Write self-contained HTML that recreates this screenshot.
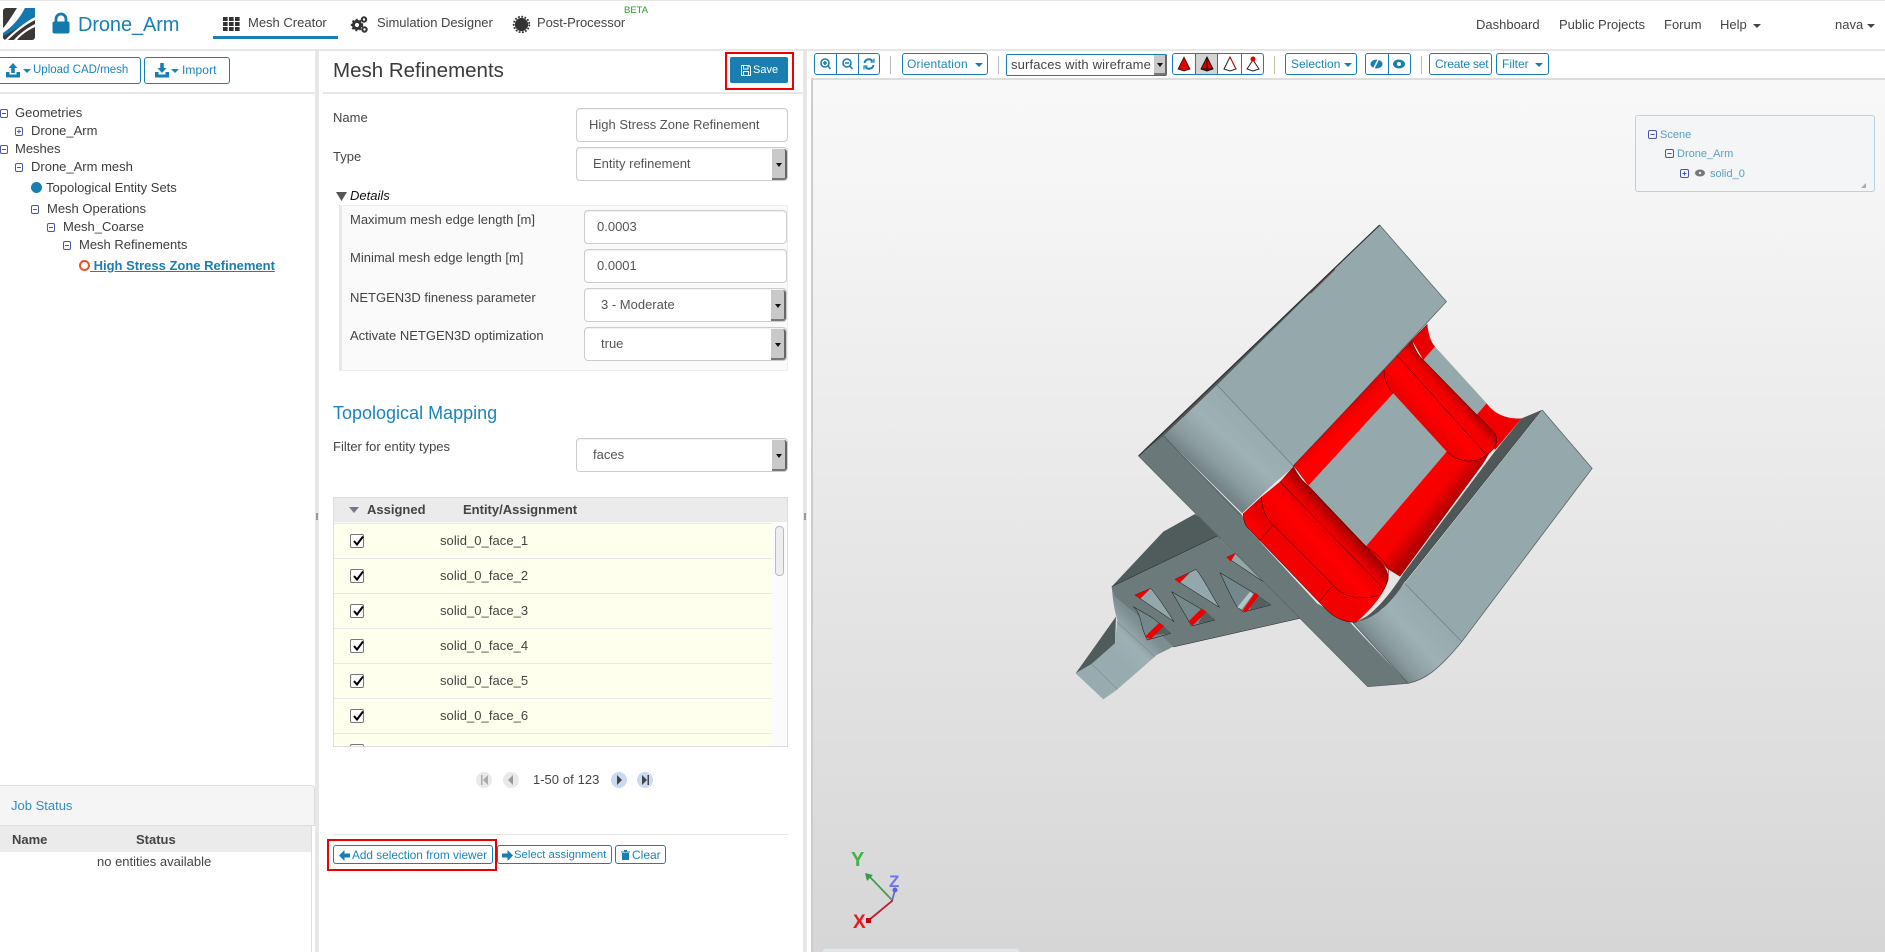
<!DOCTYPE html>
<html lang="en"><head><meta charset="utf-8"><title>Mesh Refinements</title>
<style>
html,body{margin:0;padding:0;width:1885px;height:952px;overflow:hidden;background:#fff;font-family:"Liberation Sans",sans-serif;font-size:13px;color:#444}
.a{position:absolute;box-sizing:border-box}
.t{position:absolute;white-space:nowrap;line-height:20px;height:20px}
.nav{color:#444;font-size:13px}
.tree{color:#3c3c3c;font-size:13px}
.b{position:absolute;box-sizing:border-box;border:1px solid #1a7fb0;border-radius:3px;background:#fff;color:#1a85bb}
.lb{font-size:13px;color:#444}
.in{position:absolute;box-sizing:border-box;border:1px solid #ccc;border-radius:4px;background:#fff;color:#555;font-size:13px;line-height:32px;box-shadow:inset 0 1px 1px rgba(0,0,0,.06)}
.sb{position:absolute;right:0;top:1px;bottom:0;width:15px;background:#c9c9c9;border-right:2px solid #666;border-bottom:2px solid #777;box-sizing:border-box;border-radius:0 3px 3px 0}
.sb:after{content:"";position:absolute;left:4px;top:14px;border:3px solid transparent;border-top:4px solid #111;border-bottom:0}
.row{position:absolute;left:334px;width:438px;height:35px;background:#ffffee;border-top:1px solid #e8e8e8;box-sizing:border-box}
.cb{position:absolute;left:16px;top:10px;width:14px;height:14px;box-sizing:border-box;border:1px solid #777;border-radius:2px;background:#fff}
.rt{position:absolute;left:106px;top:7px;line-height:20px;font-size:13px;color:#444;letter-spacing:.05px}
.car{position:absolute;width:0;height:0;border:4px solid transparent;border-top:4px solid currentColor;border-bottom:0}
.sep{position:absolute;width:1px;background:#b8b8cc;top:56px;height:18px}
.pg{position:absolute;top:772px;width:16px;height:16px;border-radius:50%}
.sc{position:absolute;font-size:11px;color:#5a9fc0;line-height:14px;white-space:nowrap}
svg{position:absolute;overflow:visible}
</style></head><body>

<!-- header -->
<div class="a" style="left:0;top:0;width:1885px;height:1px;background:#e7e7e7"></div>
<div class="a" style="left:0;top:49px;width:1885px;height:2px;background:#e7e7e7"></div>
<svg style="left:3px;top:8px" width="33" height="32" viewBox="0 0 33 32">
<rect width="32" height="32" rx="3" fill="#3b3735"/>
<path d="M14 0C10 6 5 15 0 20V26C8 21 17 12 22 0Z" fill="#fff"/>
<path d="M22 0H32V9C24 13 12 23 0 28V25C9 19 17 10 22 0Z" fill="#1478ad"/>
<path d="M32 9V12C22 17 12 25 5 32H2C10 24 22 14 32 9Z" fill="#fff"/>
<path d="M32 16V19C25 22 18 27 14 32H11C16 26 24 20 32 16Z" fill="#fff"/>
</svg>
<svg style="left:52px;top:13px" width="18" height="21" viewBox="0 0 18 21"><path d="M4 9V6a5 5 0 0 1 10 0v3" fill="none" stroke="#1479ad" stroke-width="2.8"/><rect x="0.5" y="8.5" width="17" height="12" rx="2" fill="#1479ad"/></svg>
<div class="t" style="left:78px;top:15px;font-size:20px;color:#1a7fb5;letter-spacing:-.1px">Drone_Arm</div>

<svg style="left:223px;top:17px" width="17" height="14" viewBox="0 0 17 14" fill="#333"><rect width="4.6" height="4"/><rect x="6" width="4.6" height="4"/><rect x="12" width="4.6" height="4"/><rect y="5" width="4.6" height="4"/><rect x="6" y="5" width="4.6" height="4"/><rect x="12" y="5" width="4.6" height="4"/><rect y="10" width="4.6" height="4"/><rect x="6" y="10" width="4.6" height="4"/><rect x="12" y="10" width="4.6" height="4"/></svg>
<div class="t nav" style="left:248px;top:13px">Mesh Creator</div>
<div class="a" style="left:213px;top:36px;width:125px;height:3px;background:#1a7fb0"></div>
<svg style="left:350px;top:15px" width="18" height="18" viewBox="0 0 18 18"><circle cx="7" cy="10" r="3.6" fill="none" stroke="#333" stroke-width="3"/><circle cx="14" cy="4.5" r="2.2" fill="none" stroke="#333" stroke-width="2"/><circle cx="14.5" cy="14.5" r="2.2" fill="none" stroke="#333" stroke-width="2"/><circle cx="7" cy="10" r="5.4" fill="none" stroke="#333" stroke-width="1.6" stroke-dasharray="2 2"/></svg>
<div class="t nav" style="left:377px;top:13px;letter-spacing:-.03px">Simulation Designer</div>
<svg style="left:513px;top:16px" width="17" height="17" viewBox="0 0 17 17"><circle cx="8.5" cy="8.5" r="6.6" fill="#333"/><circle cx="8.5" cy="8.5" r="7.8" fill="none" stroke="#333" stroke-width="1.8" stroke-dasharray="1.8 1.5"/></svg>
<div class="t nav" style="left:537px;top:13px;letter-spacing:-.05px">Post-Processor</div>
<div class="t" style="left:624px;top:1px;font-size:9.5px;color:#2a9a2a">BETA</div>

<div class="t nav" style="left:1476px;top:15px">Dashboard</div>
<div class="t nav" style="left:1559px;top:15px">Public Projects</div>
<div class="t nav" style="left:1664px;top:15px">Forum</div>
<div class="t nav" style="left:1720px;top:15px">Help</div>
<div class="car" style="left:1753px;top:24px;color:#444"></div>
<div class="t nav" style="left:1835px;top:15px">nava</div>
<div class="car" style="left:1867px;top:24px;color:#444"></div>

<!-- vertical separators -->
<div class="a" style="left:315px;top:51px;width:4px;height:901px;background:#e7e7e7"></div>
<div class="a" style="left:803px;top:51px;width:4px;height:901px;background:#e7e7e7"></div>
<div class="a" style="left:316px;top:513px;width:2px;height:7px;border-left:1px solid #999;border-right:1px solid #999"></div>
<div class="a" style="left:804px;top:513px;width:2px;height:7px;border-left:1px solid #999;border-right:1px solid #999"></div>

<!-- left panel -->
<div class="b" style="left:-3px;top:57px;width:144px;height:27px"></div>
<svg style="left:6px;top:63px" width="14" height="15" viewBox="0 0 14 15" fill="#1a7fb0"><path d="M7 0L11.5 5H8.8V10H5.2V5H2.5Z"/><path d="M0 9H3.5V11.5H10.5V9H14V14.5H0Z"/></svg>
<div class="car" style="left:23px;top:69px;color:#1a85bb"></div>
<div class="t" style="left:33px;top:60px;font-size:11.5px;color:#1a85bb">Upload CAD/mesh</div>
<div class="b" style="left:144px;top:57px;width:86px;height:27px"></div>
<svg style="left:155px;top:63px" width="14" height="15" viewBox="0 0 14 15" fill="#1a7fb0"><path d="M5.2 0H8.8V5H11.5L7 10L2.5 5H5.2Z"/><path d="M0 9H3.5V11.5H10.5V9H14V14.5H0Z"/></svg>
<div class="car" style="left:171px;top:69px;color:#1a85bb"></div>
<div class="t" style="left:182px;top:60px;font-size:12px;color:#1a85bb;letter-spacing:.1px">Import</div>
<div class="a" style="left:0;top:92px;width:315px;height:2px;background:#e7e7e7"></div>

<svg style="left:0;top:100px" width="100" height="160" viewBox="0 0 100 160" fill="none" stroke="#4a55a8" stroke-width="1">
<g><rect x="0.5" y="9.5" width="7" height="8" rx="1.5"/><path d="M2 13.5H6"/>
<rect x="15.5" y="27.5" width="7" height="8" rx="1.5"/><path d="M17 31.5H21M19 29.5V33.5"/>
<rect x="0.5" y="45.5" width="7" height="8" rx="1.5"/><path d="M2 49.5H6"/>
<rect x="15.5" y="63.5" width="7" height="8" rx="1.5"/><path d="M17 67.5H21"/>
<rect x="31.5" y="105.5" width="7" height="8" rx="1.5"/><path d="M33 109.5H37"/>
<rect x="47.5" y="123.5" width="7" height="8" rx="1.5"/><path d="M49 127.5H53"/>
<rect x="63.5" y="141.5" width="7" height="8" rx="1.5"/><path d="M65 145.5H69"/></g></svg>
<div class="t tree" style="left:15px;top:103px">Geometries</div>
<div class="t tree" style="left:31px;top:121px">Drone_Arm</div>
<div class="t tree" style="left:15px;top:139px">Meshes</div>
<div class="t tree" style="left:31px;top:157px">Drone_Arm mesh</div>
<div class="a" style="left:31px;top:182px;width:11px;height:11px;border-radius:50%;background:#1a7fb0"></div>
<div class="t tree" style="left:46px;top:178px">Topological Entity Sets</div>
<div class="t tree" style="left:47px;top:199px">Mesh Operations</div>
<div class="t tree" style="left:63px;top:217px">Mesh_Coarse</div>
<div class="t tree" style="left:79px;top:235px">Mesh Refinements</div>
<div class="a" style="left:79px;top:260px;width:11px;height:11px;border-radius:50%;border:2px solid #e2562a"></div>
<div class="t" style="left:90px;top:256px;font-size:13px;font-weight:bold;color:#1a7fb0;text-decoration:underline;white-space:pre"> High Stress Zone Refinement</div>

<!-- job status -->
<div class="a" style="left:0;top:785px;width:315px;height:41px;background:#f5f5f5;border-top:1px solid #ddd;border-right:1px solid #ddd;border-bottom:1px solid #ddd;border-radius:0 4px 0 0"></div>
<div class="t" style="left:11px;top:796px;font-size:13px;color:#2f8fc0">Job Status</div>
<div class="a" style="left:0;top:826px;width:311px;height:26px;background:#ebebeb"></div>
<div class="a" style="left:311px;top:826px;width:1px;height:126px;background:#ddd"></div>
<div class="t" style="left:12px;top:830px;font-size:13px;font-weight:bold;color:#444">Name</div>
<div class="t" style="left:136px;top:830px;font-size:13px;font-weight:bold;color:#444">Status</div>
<div class="t" style="left:97px;top:852px;font-size:13px;color:#444">no entities available</div>

<!-- middle panel -->
<div class="t" style="left:333px;top:60px;font-size:20.5px;line-height:22px;height:22px;color:#3a3a3a">Mesh Refinements</div>
<div class="a" style="left:323px;top:92px;width:480px;height:2px;background:#e7e7e7"></div>
<div class="a" style="left:725px;top:52px;width:69px;height:38px;border:2px solid #ee0000"></div>
<div class="a" style="left:730px;top:57px;width:58px;height:26px;background:#1a7fb0;border-radius:2px"></div>
<svg style="left:741px;top:65px" width="10" height="11" viewBox="0 0 10 11" fill="none" stroke="#fff" stroke-width="1"><path d="M.5.5H8L9.5 2V10.500H.5Z"/><path d="M2.500.5V4H7V.5M2.500 10.500V6.500H7.500V10.500"/></svg>
<div class="t" style="left:753px;top:60px;font-size:11px;color:#fff">Save</div>

<div class="t lb" style="left:333px;top:108px">Name</div>
<div class="in" style="left:576px;top:108px;width:212px;height:34px;padding-left:12px">High Stress Zone Refinement</div>
<div class="t lb" style="left:333px;top:147px">Type</div>
<div class="in" style="left:576px;top:147px;width:212px;height:34px;padding-left:16px">Entity refinement<div class="sb"></div></div>
<svg style="left:336px;top:192px" width="11" height="9" viewBox="0 0 11 9"><path d="M0 0H11L5.500 9Z" fill="#555"/></svg>
<div class="t" style="left:350px;top:186px;font-size:13px;font-style:italic;color:#111">Details</div>
<div class="a" style="left:339px;top:205px;width:449px;height:166px;background:#fafafa;border:1px solid #eee;border-left:3px solid #e8e8e8"></div>
<div class="t lb" style="left:350px;top:210px">Maximum mesh edge length [m]</div>
<div class="in" style="left:584px;top:210px;width:203px;height:34px;padding-left:12px">0.0003</div>
<div class="t lb" style="left:350px;top:248px">Minimal mesh edge length [m]</div>
<div class="in" style="left:584px;top:249px;width:203px;height:34px;padding-left:12px">0.0001</div>
<div class="t lb" style="left:350px;top:288px">NETGEN3D fineness parameter</div>
<div class="in" style="left:584px;top:288px;width:203px;height:34px;padding-left:16px">3 - Moderate<div class="sb"></div></div>
<div class="t lb" style="left:350px;top:326px">Activate NETGEN3D optimization</div>
<div class="in" style="left:584px;top:327px;width:203px;height:34px;padding-left:16px">true<div class="sb"></div></div>
<div class="t" style="left:333px;top:403px;font-size:18px;color:#1a85bb">Topological Mapping</div>
<div class="t lb" style="left:333px;top:437px">Filter for entity types</div>
<div class="in" style="left:576px;top:438px;width:212px;height:34px;padding-left:16px">faces<div class="sb"></div></div>

<!-- table -->
<div class="a" style="left:333px;top:497px;width:455px;height:250px;border:1px solid #ddd;overflow:hidden;background:#fbfbfb"></div>
<div class="a" style="left:334px;top:498px;width:453px;height:24px;background:#ebebeb"></div>
<svg style="left:349px;top:507px" width="10" height="6" viewBox="0 0 10 6"><path d="M0 0H10L5 6Z" fill="#778"/></svg>
<div class="t" style="left:367px;top:500px;font-size:13px;font-weight:bold;color:#444">Assigned</div>
<div class="t" style="left:463px;top:500px;font-size:13px;font-weight:bold;color:#444">Entity/Assignment</div>
<div class="row" style="top:523px"><div class="cb"><svg style="left:1px;top:0" width="12" height="12" viewBox="0 0 12 12"><path d="M2 6L5 9.500L11 1.500" fill="none" stroke="#000" stroke-width="2"/></svg></div><div class="rt">solid_0_face_1</div></div>
<div class="row" style="top:558px"><div class="cb"><svg style="left:1px;top:0" width="12" height="12" viewBox="0 0 12 12"><path d="M2 6L5 9.500L11 1.500" fill="none" stroke="#000" stroke-width="2"/></svg></div><div class="rt">solid_0_face_2</div></div>
<div class="row" style="top:593px"><div class="cb"><svg style="left:1px;top:0" width="12" height="12" viewBox="0 0 12 12"><path d="M2 6L5 9.500L11 1.500" fill="none" stroke="#000" stroke-width="2"/></svg></div><div class="rt">solid_0_face_3</div></div>
<div class="row" style="top:628px"><div class="cb"><svg style="left:1px;top:0" width="12" height="12" viewBox="0 0 12 12"><path d="M2 6L5 9.500L11 1.500" fill="none" stroke="#000" stroke-width="2"/></svg></div><div class="rt">solid_0_face_4</div></div>
<div class="row" style="top:663px"><div class="cb"><svg style="left:1px;top:0" width="12" height="12" viewBox="0 0 12 12"><path d="M2 6L5 9.500L11 1.500" fill="none" stroke="#000" stroke-width="2"/></svg></div><div class="rt">solid_0_face_5</div></div>
<div class="row" style="top:698px"><div class="cb"><svg style="left:1px;top:0" width="12" height="12" viewBox="0 0 12 12"><path d="M2 6L5 9.500L11 1.500" fill="none" stroke="#000" stroke-width="2"/></svg></div><div class="rt">solid_0_face_6</div></div>
<div class="row" style="top:733px;height:14px;overflow:hidden"><div class="cb"></div></div>
<div class="a" style="left:333px;top:746px;width:455px;height:1px;background:#ddd"></div>
<div class="a" style="left:775px;top:526px;width:9px;height:50px;background:#eee;border:1px solid #bbb;border-radius:4px"></div>

<!-- pager -->
<div class="pg" style="left:476px;background:#e9e9e9"></div>
<svg style="left:480px;top:775px" width="9" height="10" viewBox="0 0 9 10"><path d="M1 0H2.500V10H1ZM8 0V10L3 5Z" fill="#aaa"/></svg>
<div class="pg" style="left:503px;background:#e9e9e9"></div>
<svg style="left:507px;top:775px" width="7" height="10" viewBox="0 0 7 10"><path d="M6 0V10L1 5Z" fill="#999"/></svg>
<div class="t" style="left:533px;top:770px;font-size:13px;color:#444;word-spacing:.3px">1-50 of 123</div>
<div class="pg" style="left:611px;background:#c9daf2"></div>
<svg style="left:616px;top:775px" width="7" height="10" viewBox="0 0 7 10"><path d="M1 0V10L6 5Z" fill="#444"/></svg>
<div class="pg" style="left:637px;background:#c9daf2"></div>
<svg style="left:641px;top:775px" width="9" height="10" viewBox="0 0 9 10"><path d="M1 0V10L6 5ZM6.500 0H8V10H6.500Z" fill="#444"/></svg>

<!-- bottom buttons -->
<div class="a" style="left:333px;top:834px;width:455px;height:1px;background:#e5e5e5"></div>
<div class="a" style="left:327px;top:839px;width:170px;height:32px;border:2px solid #ee0000"></div>
<div class="b" style="left:333px;top:845px;width:160px;height:19px"></div>
<svg style="left:339px;top:850px" width="11" height="11" viewBox="0 0 11 11"><path d="M5.500 0L0 5.500L5.500 11V7.500H11V3.500H5.500Z" fill="#1a7fb0"/></svg>
<div class="t" style="left:352px;top:845px;font-size:11.8px;color:#1a85bb">Add selection from viewer</div>
<div class="b" style="left:497px;top:845px;width:115px;height:19px"></div>
<svg style="left:502px;top:850px" width="11" height="11" viewBox="0 0 11 11"><path d="M5.500 0L11 5.500L5.500 11V7.500H0V3.500H5.500Z" fill="#1a7fb0"/></svg>
<div class="t" style="left:514px;top:845px;font-size:11.3px;color:#1a85bb">Select assignment</div>
<div class="b" style="left:615px;top:845px;width:51px;height:19px"></div>
<svg style="left:621px;top:850px" width="9" height="10" viewBox="0 0 9 10"><path d="M0 1.500H9V2.500H0ZM3 0H6V1.500H3ZM1 3H8V10H1Z" fill="#1a7fb0"/></svg>
<div class="t" style="left:632px;top:845px;font-size:12px;color:#1a85bb">Clear</div>

<!-- viewer toolbar -->
<div class="b" style="left:814px;top:53px;width:66px;height:22px"></div>
<div class="a" style="left:836px;top:54px;width:1px;height:20px;background:#1a7fb0"></div>
<div class="a" style="left:858px;top:54px;width:1px;height:20px;background:#1a7fb0"></div>
<svg style="left:820px;top:58px" width="11" height="12" viewBox="0 0 11 12" fill="none" stroke="#1a7fb0" stroke-width="1.600"><circle cx="5" cy="5" r="4"/><path d="M8 8L10.500 11M3 5H7M5 3V7" /></svg>
<svg style="left:842px;top:58px" width="11" height="12" viewBox="0 0 11 12" fill="none" stroke="#1a7fb0" stroke-width="1.600"><circle cx="5" cy="5" r="4"/><path d="M8 8L10.500 11M3 5H7"/></svg>
<svg style="left:863px;top:58px" width="12" height="12" viewBox="0 0 12 12" fill="none" stroke="#1a7fb0" stroke-width="2"><path d="M1.500 5A4.500 4.500 0 0 1 9.500 3M10.500 7A4.500 4.500 0 0 1 2.500 9"/><path d="M7.500 4H11V.5M4.500 8H1V11.500" stroke-width="1.200"/></svg>
<div class="sep" style="left:890px"></div>
<div class="b" style="left:902px;top:53px;width:86px;height:22px"></div>
<div class="t" style="left:907px;top:54px;font-size:12px;color:#1a85bb;letter-spacing:.2px">Orientation</div>
<div class="car" style="left:975px;top:63px;color:#1a7fb0"></div>
<div class="sep" style="left:998px"></div>
<div class="a" style="left:1006px;top:54px;width:161px;height:22px;border:1px solid #1a7fb0;border-radius:2px;background:#fff"></div>
<div class="t" style="left:1011px;top:55px;font-size:13px;color:#444;letter-spacing:.15px">surfaces with wireframe</div>
<div class="a" style="left:1154px;top:55px;width:13px;height:20px;background:#c9c9c9;border-right:2px solid #666;border-bottom:2px solid #777"></div>
<div class="car" style="left:1157px;top:63px;color:#111;border-width:3px;border-top-width:4px;border-bottom-width:0"></div>
<div class="b" style="left:1172px;top:53px;width:92px;height:22px"></div>
<div class="a" style="left:1195px;top:54px;width:23px;height:20px;background:#d4d4d4;border-left:1px solid #1a7fb0;border-right:1px solid #1a7fb0"></div>
<div class="a" style="left:1241px;top:54px;width:1px;height:20px;background:#1a7fb0"></div>
<svg style="left:1176px;top:56px" width="88" height="17" viewBox="0 0 88 17">
<path d="M8 1L2 13L8 15L14 13Z" fill="#e00000" stroke="#111" stroke-width=".7"/>
<path d="M31 1L25 13L31 15L37 13Z" fill="#e00000" stroke="#111" stroke-width=".9"/><path d="M31 1V15M25 13L37 13" stroke="#111" stroke-width=".9"/>
<path d="M54 1L48 13L54 15L60 13Z" fill="#fff" stroke="#222" stroke-width="1"/><path d="M54 1L60 13" stroke="#e00000" stroke-width="1"/>
<path d="M77 4L71 13L77 15L83 13Z" fill="#fff" stroke="#222" stroke-width="1"/><circle cx="77" cy="3" r="2.500" fill="#e00000"/>
</svg>
<div class="sep" style="left:1274px;background:#c9c0a0"></div>
<div class="b" style="left:1285px;top:53px;width:72px;height:22px"></div>
<div class="t" style="left:1291px;top:54px;font-size:12px;color:#1a85bb">Selection</div>
<div class="car" style="left:1344px;top:63px;color:#1a7fb0"></div>
<div class="b" style="left:1365px;top:53px;width:46px;height:22px"></div>
<div class="a" style="left:1388px;top:54px;width:1px;height:20px;background:#1a7fb0"></div>
<svg style="left:1370px;top:58px" width="36" height="12" viewBox="0 0 36 12"><ellipse cx="6.500" cy="6" rx="6" ry="4.500" fill="#1a7fb0"/><path d="M9 0L3 12" stroke="#fff" stroke-width="1.500"/><ellipse cx="29" cy="6" rx="6" ry="4.500" fill="#1a7fb0"/><circle cx="29" cy="6" r="2" fill="#fff"/></svg>
<div class="sep" style="left:1421px"></div>
<div class="b" style="left:1429px;top:53px;width:63px;height:22px"></div>
<div class="t" style="left:1435px;top:54px;font-size:12px;color:#1a85bb;letter-spacing:-.2px">Create set</div>
<div class="b" style="left:1496px;top:53px;width:53px;height:22px"></div>
<div class="t" style="left:1502px;top:54px;font-size:12px;color:#1a85bb">Filter</div>
<div class="car" style="left:1535px;top:63px;color:#1a7fb0"></div>

<!-- canvas -->
<div class="a" style="left:811px;top:78px;width:1074px;height:874px;background:linear-gradient(#f8f8f8,#f6f6f6 10%,#d6d6d6);border-top:2px solid #ddd;border-left:2px solid #ccc"></div>

<svg style="left:0;top:0" width="1885" height="952" viewBox="0 0 1885 952">
<defs>
<linearGradient id="fil1" gradientUnits="userSpaceOnUse" x1="290" y1="708" x2="440" y2="555"><stop offset="0" stop-color="#748386"/><stop offset=".2" stop-color="#8a9b9e"/><stop offset=".55" stop-color="#9eb2b5"/><stop offset="1" stop-color="#97aaad"/></linearGradient>
<linearGradient id="fil2" gradientUnits="userSpaceOnUse" x1="820" y1="1270" x2="965" y2="1150"><stop offset="0" stop-color="#748386"/><stop offset=".2" stop-color="#8a9b9e"/><stop offset=".55" stop-color="#9eb2b5"/><stop offset="1" stop-color="#97aaad"/></linearGradient>
<linearGradient id="fil3" gradientUnits="userSpaceOnUse" x1="190" y1="262" x2="105" y2="345"><stop offset="0" stop-color="#7d8e91"/><stop offset=".5" stop-color="#9db0b3"/><stop offset="1" stop-color="#98acaf"/></linearGradient>
<linearGradient id="rBar1" gradientUnits="userSpaceOnUse" x1="400" y1="220" x2="470" y2="290"><stop offset="0" stop-color="#a80000"/><stop offset=".55" stop-color="#e00000"/><stop offset="1" stop-color="#ff0000"/></linearGradient>
<linearGradient id="rBar2" gradientUnits="userSpaceOnUse" x1="610" y1="510" x2="720" y2="600"><stop offset="0" stop-color="#ff0000"/><stop offset=".6" stop-color="#f50000"/><stop offset="1" stop-color="#b00000"/></linearGradient>
<linearGradient id="rTop" gradientUnits="userSpaceOnUse" x1="650" y1="300" x2="770" y2="190"><stop offset="0" stop-color="#e80000"/><stop offset=".35" stop-color="#ff0000"/><stop offset=".7" stop-color="#f00000"/><stop offset="1" stop-color="#8f0000"/></linearGradient>
<linearGradient id="rLow" gradientUnits="userSpaceOnUse" x1="240" y1="720" x2="400" y2="570"><stop offset="0" stop-color="#f40000"/><stop offset=".3" stop-color="#f20000"/><stop offset=".55" stop-color="#ff0000"/><stop offset=".8" stop-color="#e60000"/><stop offset="1" stop-color="#950000"/></linearGradient>
<linearGradient id="rEnd" gradientUnits="userSpaceOnUse" x1="130" y1="600" x2="230" y2="500"><stop offset="0" stop-color="#ff0000"/><stop offset="1" stop-color="#b80000"/></linearGradient>
</defs>

<!-- arm, zoom-8 space -->
<g transform="translate(1060,520) scale(.33333)" stroke-linejoin="round">
<path d="M155 200L310 35L405 -18L500 50Z" fill="#505b5c"/>
<path d="M47 460L168 290L165 370L95 432Z" fill="#505b5c"/>
<path d="M47 460L95 432L165 370L172 300C160 260 158 230 155 200L340 380L290 405L170 510L130 538Z" fill="url(#fil3)"/>
<path d="M155 200L472 48L720 295L340 381C310 350 250 300 165 230Z" fill="#6c7a7b"/>
<path d="M155 200L472 48M340 381L720 295" fill="none" stroke="#222" stroke-width="1.500"/>
<path d="M95 432L172 508M170 305L285 410" fill="none" stroke="#66767a" stroke-width="1.500"/>
<!-- holes -->
<path d="M225 225L272 205C290 225 320 270 342 305Z" fill="#94a7aa" stroke="#111" stroke-width="1.500"/>
<path d="M225 225L272 205L240 237Z" fill="#ee0000"/>
<path d="M220 260C245 280 240 320 262 360L332 340L280 295Z" fill="#74878a" stroke="#111" stroke-width="1.500"/>
<path d="M285 345L305 312L332 340Z" fill="#565f60"/>
<path d="M255 350L298 308L312 318L272 358Z" fill="#ee0000"/>
<path d="M345 178L408 148C430 175 455 225 478 262Z" fill="#94a7aa" stroke="#111" stroke-width="1.500"/>
<path d="M345 178L390 158L358 190Z" fill="#ee0000"/>
<path d="M335 215L395 318L465 300L420 265Z" fill="#74878a" stroke="#111" stroke-width="1.500"/>
<path d="M415 310L435 272L465 300Z" fill="#565f60"/>
<path d="M385 305L425 265L440 276L398 316Z" fill="#ee0000"/>
<path d="M480 158L575 215L633 255L550 276L532 262C510 225 495 190 480 158Z" fill="#74878a" stroke="#111" stroke-width="1.500"/>
<path d="M580 218L633 255L570 270Z" fill="#565f60"/>
<path d="M532 262L570 215L580 222L545 268Z" fill="#b6c5c7"/>
<path d="M548 272L585 218L597 226L560 276Z" fill="#ee0000"/>
<path d="M500 112L527 100L610 185Z" fill="#94a7aa" stroke="#111" stroke-width="1.500"/>
<path d="M500 112L527 100L512 125Z" fill="#ee0000"/>
</g>

<!-- main block, zoom-5 space -->
<g transform="translate(1060,200) scale(.35714,.33333)" stroke-linejoin="round">
<path d="M220 768L290 708L510 945L530 990L720 1210L810 1265L975 1450L862 1460Z" fill="#6a7879"/>
<path d="M220 768L895 75L440 555L290 708Z" fill="#4e5859"/>
<path d="M290 708L440 555L655 800L600 850L510 940Z" fill="url(#fil1)"/>
<path d="M440 555L895 75L1082 305L655 800Z" fill="#95a8ab"/>
<path d="M1350 630L1490 805L1125 1325L965 1150Z" fill="#95a8ab"/>
<path d="M820 1268L900 1230L965 1150L1125 1325C1060 1410 1020 1440 975 1450Z" fill="url(#fil2)"/>
<path d="M895 75L1082 305L655 800M1350 630L1490 805L1125 1325C1060 1410 1020 1440 975 1450L862 1460L220 768" fill="none" stroke="#5a6567" stroke-width=".8" vector-effect="non-scaling-stroke"/>
<path d="M290 708L505 945M820 1268L975 1450" fill="none" stroke="#4d5758" stroke-width=".7" vector-effect="non-scaling-stroke"/>
<path d="M440 555L655 800M965 1150L1125 1325" fill="none" stroke="#667679" stroke-width=".6" vector-effect="non-scaling-stroke"/>
<path d="M220 768L895 75" fill="none" stroke="#2a3030" stroke-width="1.200" vector-effect="non-scaling-stroke"/>
<path d="M345 650L412 580M702 280L770 208" fill="none" stroke="#8a3a3a" stroke-width=".8" vector-effect="non-scaling-stroke"/>
</g>

<!-- hole and red surfaces, zoom-9 space -->
<g transform="translate(1200,320) scale(.33333)" stroke-linejoin="round">
<!-- right end pieces -->
<path d="M705 80L860 250L825 290L670 120Z" fill="#95a8ab"/>
<path d="M635 60L682 12C685 45 693 65 705 80L670 120Z" fill="#e80000"/>
<path d="M860 250C885 285 925 298 965 295L885 390L825 290Z" fill="#f00000"/>
<!-- window -->
<path d="M580 220L740 395L497 680L325 497Z" fill="#95a8ab"/>
<!-- dark lip -->
<path d="M1025 270L965 295L880 400L610 760C560 840 510 890 470 906C530 895 580 840 615 785Z" fill="#4e5859"/>
<!-- bars -->
<path d="M280 437L552 150L580 220L325 497Z" fill="url(#rBar1)"/>
<path d="M497 680L740 395L825 290L880 380L850 430L600 770L560 745Z" fill="url(#rBar2)"/>
<!-- top roller -->
<path d="M552 150L635 60C645 90 655 105 670 120L890 345C898 380 870 400 860 405C815 435 775 425 740 395L580 220C560 195 552 175 552 150Z" fill="url(#rTop)"/>
<!-- bottom roller -->
<path d="M130 580L185 530L240 485L280 440C295 470 310 485 325 497L540 722C560 745 567 760 565 780C550 830 500 880 470 906C440 910 405 895 380 870L140 620C133 610 130 595 130 580Z" fill="url(#rLow)"/>
<path d="M130 580L185 530C185 570 200 595 220 615L178 662L140 620C133 610 130 595 130 580Z" fill="url(#rEnd)"/>
<!-- lines -->
<g fill="none" stroke="#2a0000" stroke-width="1.500">
<path d="M240 485L545 800"/>
<path d="M185 530C185 570 200 595 220 615L395 790C430 835 480 842 540 825C560 800 568 770 565 745C545 710 520 695 497 680"/>
<path d="M178 662L220 615M358 845L395 800"/>
<path d="M590 105L860 405"/>
<path d="M552 150C552 180 565 205 580 220"/>
<path d="M635 60C645 90 655 105 670 120L880 335C895 355 895 380 860 405C815 435 775 425 740 395"/>
<path d="M280 437C295 470 310 485 325 497L497 680"/>
<path d="M130 580C130 595 133 610 140 620L380 870C405 895 440 910 470 906"/>
</g>
<path d="M682 12L280 437M1025 270L615 785" fill="none" stroke="#222" stroke-width="1.500"/>
</g>

<!-- axes -->
<g stroke-linecap="round">
<path d="M892 900L869 876" stroke="#4a9a55" stroke-width="1.800"/><path d="M865 873L873 875L867 881Z" fill="#3a9a4a"/>
<path d="M892 901L895 890" stroke="#6a6ac8" stroke-width="1.800"/><circle cx="895" cy="890" r="2.500" fill="#6060e0"/>
<path d="M892 901L869 920" stroke="#c02030" stroke-width="1.800"/><rect x="866" y="918" width="5" height="5" fill="#c00010"/>
</g>
<text x="851" y="866" font-family="Liberation Sans,sans-serif" font-size="20" font-weight="bold" fill="#3fb54a">Y</text>
<text x="889" y="887" font-family="Liberation Sans,sans-serif" font-size="17" font-weight="bold" fill="#7070ff">Z</text>
<text x="853" y="928" font-family="Liberation Sans,sans-serif" font-size="19" font-weight="bold" fill="#e81820">X</text>
</svg>

<!-- scene box -->
<div class="a" style="left:1635px;top:115px;width:240px;height:77px;border:1px solid #b5d5e5;border-radius:3px;background:#f3f5f6"></div>
<svg style="left:1640px;top:125px" width="235" height="67" viewBox="0 0 235 67" fill="none" stroke="#4a55a8" stroke-width="1">
<rect x="8.500" y="5.500" width="8" height="8" rx="1.500"/><path d="M10.500 9.500H14.500"/>
<rect x="25.500" y="24.500" width="8" height="8" rx="1.500"/><path d="M27.500 28.500H31.500"/>
<rect x="40.500" y="44.500" width="8" height="8" rx="1.500"/><path d="M42.500 48.500H46.500M44.500 46.500V50.500"/>
<ellipse cx="60" cy="48" rx="5" ry="3.500" fill="#777" stroke="none"/><circle cx="60" cy="48" r="1.200" fill="#eee" stroke="none"/>
<path d="M226 58L221 63H226Z" fill="#aaa" stroke="none"/>
</svg>
<div class="sc" style="left:1660px;top:128px">Scene</div>
<div class="sc" style="left:1677px;top:147px">Drone_Arm</div>
<div class="sc" style="left:1710px;top:167px">solid_0</div>

<div class="a" style="left:822px;top:948px;width:198px;height:4px;background:#e4e6e7;border:1px solid #cfdbe0;border-bottom:0;border-radius:3px 3px 0 0"></div>

</body></html>
